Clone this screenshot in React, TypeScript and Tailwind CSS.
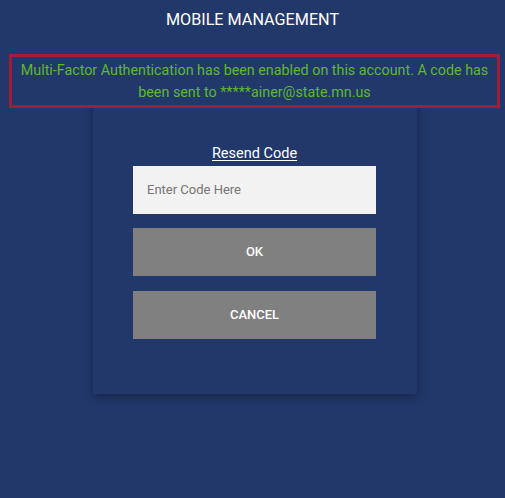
export default function App() {
  return (
    <div className="h-[498px] w-full bg-[#22386b] overflow-hidden" style={{ fontFamily: "Roboto, 'Liberation Sans', sans-serif" }}>
      <div className="h-[41px] flex items-center justify-center text-white text-[16.2px]">MOBILE MANAGEMENT</div>
      <div className="relative">
        <div className="relative z-10 ml-[9px] mr-[5px] mt-[13px] border-[3px] border-[#a31d3a] bg-[#22386b] h-[54px] flex items-center justify-center text-center text-[14.3px] leading-[22px] text-[#5fb82d] px-1">
          Multi-Factor Authentication has been enabled on this account. A code has been sent to *****ainer@state.mn.us
        </div>
        <div className="w-[324px] ml-[93px] -mt-[8px] bg-[#22386b] shadow-[0_3px_10px_rgba(0,0,0,0.35)] pt-[44px] pb-[55px] pl-[40px] pr-[41px] flex flex-col">
          <div className="h-[20px] flex items-center justify-center">
            <span className="text-white text-[14.5px] underline underline-offset-2">Resend Code</span>
          </div>
          <div className="mt-[2px] h-[48px] bg-[#f2f2f2] flex items-center pl-[14px] text-[13px] text-[#757575]">Enter Code Here</div>
          <div className="mt-[14px] h-[48px] bg-[#808080] flex items-center justify-center text-white text-[13px] font-medium">OK</div>
          <div className="mt-[15px] h-[48px] bg-[#808080] flex items-center justify-center text-white text-[13px] font-medium">CANCEL</div>
        </div>
      </div>
    </div>
  );
}
